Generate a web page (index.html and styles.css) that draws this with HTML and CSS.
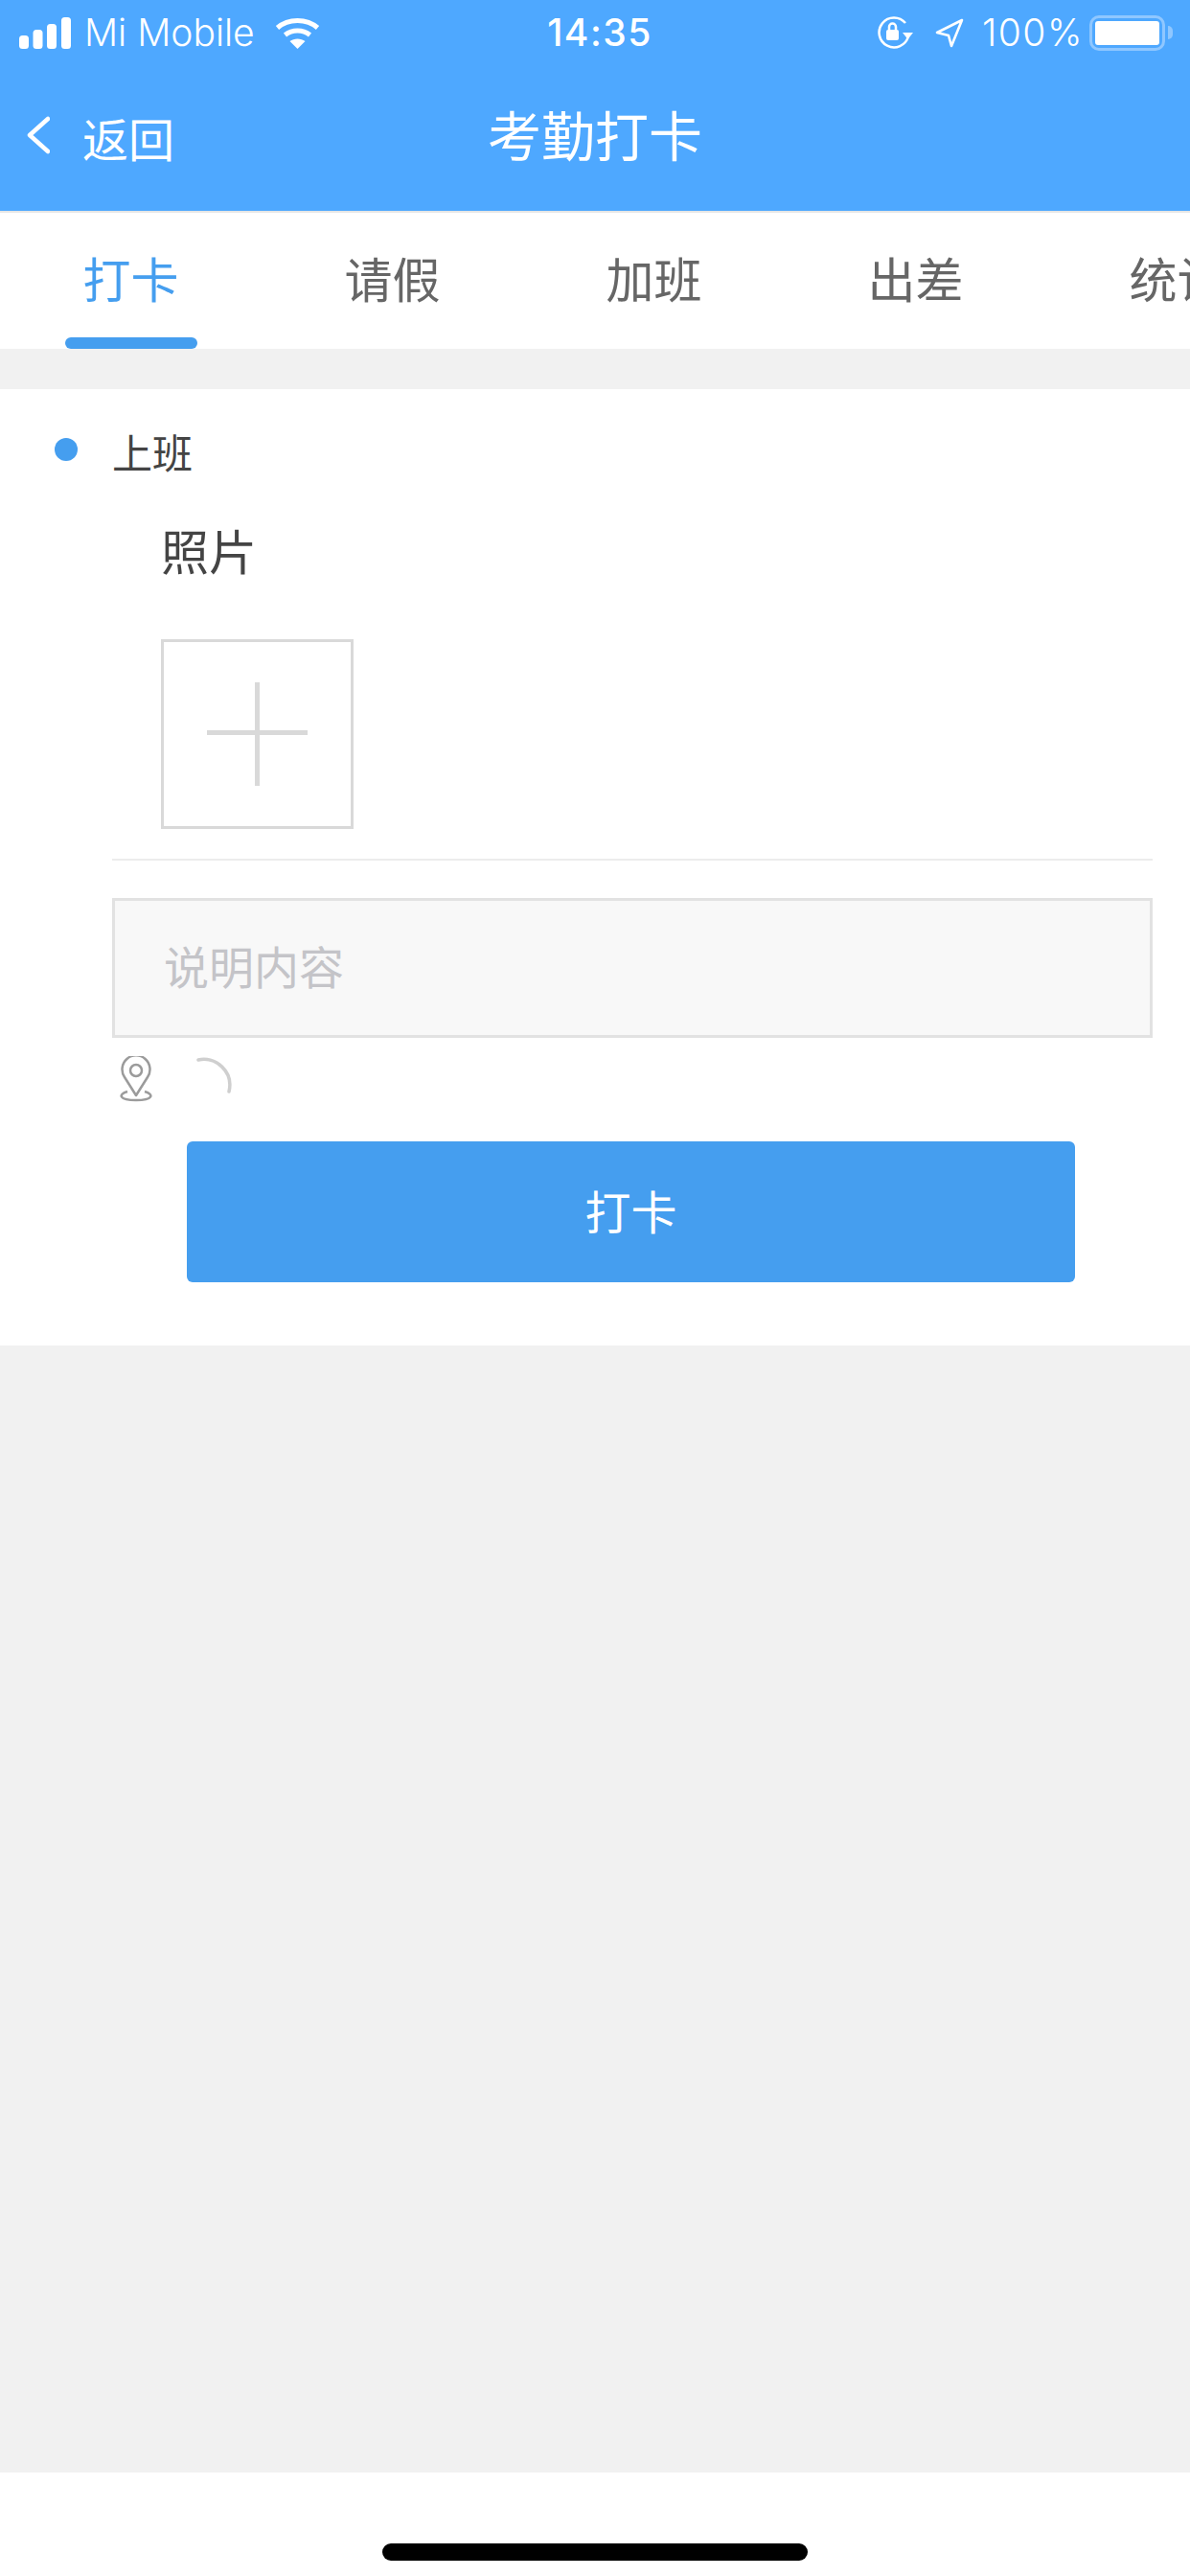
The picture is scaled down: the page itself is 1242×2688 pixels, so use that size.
FILE: index.html
```html
<!DOCTYPE html>
<html lang="zh">
<head>
  <meta charset="utf-8">
  <title>考勤打卡</title>
  <link rel="stylesheet" href="styles.css">
</head>
<body>
  <div class="app">
    <div class="top">
      <div class="status-bar">
        <div class="status-left">
          <svg class="signal" width="54" height="33" viewBox="0 0 54 33" fill="#fff">
            <rect x="0" y="19" width="10" height="14" rx="3.5"/>
            <rect x="14.500" y="13" width="10" height="20" rx="3.5"/>
            <rect x="29" y="7" width="10" height="26" rx="3.5"/>
            <rect x="44" y="0" width="10" height="33" rx="3.5"/>
          </svg>
          <span class="carrier">Mi Mobile</span>
          <svg class="wifi" width="47" height="33" viewBox="0 0 47 33" fill="none" stroke="#fff" stroke-width="5">
            <path d="M2.500 11 C14 1 33 1 44.500 11"/>
            <path d="M10.500 18.500 C18 12.500 29 12.500 36.500 18.500"/>
            <path d="M23.500 33 L15.500 25 C20 21.500 27 21.500 31.500 25 Z" fill="#fff" stroke="none"/>
          </svg>
        </div>
        <div class="status-time">14:35</div>
        <div class="status-right">
          <svg class="lock" width="38" height="36" viewBox="0 0 38 36" fill="none" stroke="#fff" stroke-width="2.500">
            <path d="M33 22 A15.500 15.500 0 1 1 30 8"/>
            <path d="M27 18 L38 18 L32.500 25 Z" fill="#fff" stroke="none"/>
            <rect x="10" y="15" width="13" height="11" rx="2" fill="#fff" stroke="none"/>
            <path d="M13 15 V12 a3.500 3.500 0 0 1 7 0 V15"/>
          </svg>
          <svg class="arrow" width="30" height="31" viewBox="0 0 30 31" fill="none" stroke="#fff" stroke-width="2.600" stroke-linejoin="round">
            <path d="M28 2 L2 15 L14 18 L17 29 Z"/>
          </svg>
          <span class="percent">100%</span>
          <div class="battery"><div class="battery-fill"></div></div>
          <div class="battery-nub"></div>
        </div>
      </div>
      <div class="nav-bar">
        <div class="back">
          <svg width="24" height="40" viewBox="0 0 24 40" fill="none" stroke="#fff" stroke-width="4.500" stroke-linecap="round" stroke-linejoin="round">
            <path d="M22 3 L3 20 L22 37"/>
          </svg>
          <span class="back-text">返回</span>
        </div>
        <div class="nav-title">考勤打卡</div>
      </div>
    </div>

    <div class="tabs">
      <div class="tab active">打卡</div>
      <div class="tab">请假</div>
      <div class="tab">加班</div>
      <div class="tab">出差</div>
      <div class="tab">统计</div>
    </div>

    <div class="main">
      <div class="card">
        <div class="shift">
          <span class="dot"></span>
          <span>上班</span>
        </div>
        <div class="photo-label">照片</div>
        <div class="photo-add">
          <svg width="105" height="108" viewBox="0 0 105 108" fill="#d9d9d9">
            <rect x="50" y="0" width="5" height="108"/>
            <rect x="0" y="50" width="105" height="5"/>
          </svg>
        </div>
        <div class="divider"></div>
        <div class="note">说明内容</div>
        <div class="location">
          <svg width="36" height="48" viewBox="0 0 36 48" fill="none" stroke="#9b9b9b" stroke-width="2.500">
            <path d="M18 41 L6 22 A14.500 14.500 0 1 1 30 22 Z" stroke-linejoin="round"/>
            <circle cx="18" cy="15" r="6"/>
            <path d="M9 37 C-1 40 0 46 18 46 C36 46 37 40 27 37"/>
          </svg>
          <svg class="spinner" width="38" height="38" viewBox="0 0 38 38" fill="none" stroke="#cfcfcf" stroke-width="3.500" stroke-linecap="round">
            <path d="M2 3 C20 -1 39 15 34 36"/>
          </svg>
        </div>
        <div class="punch">打卡</div>
      </div>
    </div>

    <div class="home-area">
      <div class="home-bar"></div>
    </div>
  </div>
</body>
</html>
```

FILE: styles.css
```css
* {
  margin: 0;
  padding: 0;
  box-sizing: border-box;
}

body {
  font-family: "Noto Sans CJK SC", "Noto Sans", sans-serif;
  background: #f1f1f1;
}

.app {
  width: 1242px;
  height: 2688px;
  display: flex;
  flex-direction: column;
  overflow: hidden;
}

.top {
  height: 222px;
  background: #4ea8ff;
  border-bottom: 2px solid #e6e6e6;
  color: white;
}

.status-bar {
  height: 70px;
  padding: 13px 18px 0 20px;
  display: grid;
  grid-template-columns: 1fr auto 1fr;
  align-items: start;
}

.status-left, .status-right {
  display: flex;
  align-items: center;
  height: 42px;
}

.status-right {
  justify-content: flex-end;
}

.carrier, .percent, .status-time {
  font-family: Inter, Roboto, sans-serif;
  font-size: 39px;
  line-height: 42px;
}

.carrier {
  font-weight: 300;
  margin-left: 14px;
}

.wifi {
  margin-left: 21px;
}

.status-time {
  font-weight: 500;
  letter-spacing: 1.500px;
  margin-left: 8px;
}

.arrow {
  margin-left: 23px;
}

.percent {
  font-weight: 300;
  letter-spacing: 1.500px;
  margin-left: 19px;
}

.battery {
  width: 79px;
  height: 37px;
  margin-left: 6px;
  padding: 3px;
  border: 3px solid #8fc7ff;
  border-radius: 10px;
}

.battery-fill {
  height: 100%;
  background: white;
  border-radius: 3px;
}

.battery-nub {
  width: 5px;
  height: 14px;
  margin-left: 3px;
  background: #8fc7ff;
  border-radius: 0 5px 5px 0;
}

.nav-bar {
  height: 140px;
  padding: 0 28px;
  display: grid;
  grid-template-columns: 1fr auto 1fr;
  align-items: center;
}

.back {
  display: flex;
  align-items: center;
  gap: 34px;
  font-size: 48px;
  line-height: 60px;
}

.back svg {
  flex-shrink: 0;
  margin-top: 2px;
}

.back-text {
  margin-top: 6px;
}

.nav-title {
  font-size: 56px;
  line-height: 70px;
  margin-bottom: 2px;
}

.tabs {
  display: flex;
  height: 142px;
  background: white;
}

.tab {
  flex: 0 0 273px;
  height: 100%;
  padding-top: 34px;
  text-align: center;
  font-size: 50px;
  line-height: 66px;
  color: #666;
  position: relative;
}

.tab.active {
  color: #459eef;
}

.tab.active::after {
  content: "";
  position: absolute;
  left: 68px;
  bottom: 0;
  width: 138px;
  height: 12px;
  background: #459eef;
  border-radius: 6px;
}

.main {
  flex: 1;
  padding-top: 42px;
}

.card {
  height: 998px;
  background: white;
  padding: 37px 39px 0 117px;
}

.shift {
  display: flex;
  align-items: center;
  height: 56px;
  font-size: 42px;
  line-height: 56px;
  color: #444;
  position: relative;
}

.dot {
  position: absolute;
  left: -60px;
  top: 14px;
  width: 24px;
  height: 24px;
  border-radius: 50%;
  background: #459eef;
}

.photo-label {
  margin-top: 41px;
  margin-left: 51px;
  font-size: 50px;
  line-height: 66px;
  color: #444;
}

.photo-add {
  width: 201px;
  height: 198px;
  margin-top: 61px;
  margin-left: 51px;
  border: 3px solid #d9d9d9;
  display: flex;
  align-items: center;
  justify-content: center;
}

.divider {
  height: 2px;
  margin-top: 31px;
  background: #ececec;
}

.note {
  height: 146px;
  margin-top: 39px;
  padding-left: 51px;
  background: #f8f8f8;
  border: 3px solid #e2e2e2;
  font-size: 47px;
  line-height: 134px;
  color: #c4c4c8;
}

.location {
  display: flex;
  align-items: flex-start;
  height: 108px;
  padding: 19px 0 0 7px;
}

.spinner {
  margin-left: 45px;
  margin-top: 1px;
}

.punch {
  width: 927px;
  height: 147px;
  margin-left: 78px;
  background: #459eef;
  border-radius: 6px;
  color: white;
  font-size: 48px;
  line-height: 143px;
  text-align: center;
}

.home-area {
  height: 108px;
  background: white;
  padding-top: 74px;
}

.home-bar {
  width: 444px;
  height: 18px;
  margin: 0 auto;
  background: black;
  border-radius: 9px;
}
```
